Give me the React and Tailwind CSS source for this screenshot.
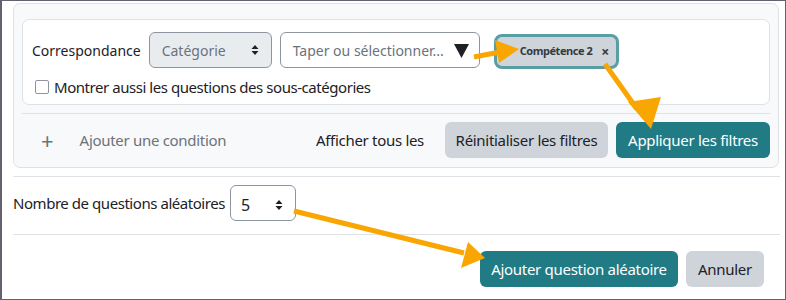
import React from 'react';

const FONT = { fontFamily: '"Noto Sans", "Open Sans", sans-serif' };

function UpDown({ className = '' }) {
    return (
        <svg width="8" height="12" viewBox="0 0 8 12" className={className}>
            <polygon points="4,1 7.5,5 0.5,5" fill="#1d2125" />
            <polygon points="4,11 7.5,7 0.5,7" fill="#1d2125" />
        </svg>
    );
}

function Arrows() {
    // orange callout arrows drawn over the form
    const c = '#f9a602';
    return (
        <svg className="absolute inset-0 pointer-events-none" width="786" height="300" viewBox="0 0 786 300">
            <line x1="472" y1="56" x2="498" y2="51" stroke={c} strokeWidth="5" />
            <polygon points="517,48 493,39 497,62" fill={c} />

            <line x1="603" y1="63" x2="635" y2="108" stroke={c} strokeWidth="5" />
            <polygon points="649,128 626,101 659,96" fill={c} />

            <line x1="292" y1="210" x2="462" y2="252" stroke={c} strokeWidth="5" />
            <polygon points="483,257 459,267 466,241" fill={c} />
        </svg>
    );
}

export default function App() {
    return (
        <div className="relative w-[786px] h-[300px] bg-white border border-[#62626f] border-l-2 overflow-hidden whitespace-nowrap text-[14px] text-[#1d2125]" style={FONT}>
            {/* Filter card */}
            <div className="mt-[2px] ml-[11px] w-[766px] h-[165px] rounded-[7px] border border-[#dee2e6] bg-[#f8f9fa] px-2 pt-[15px]">
                <div className="h-[86px] rounded-[7px] border border-[#dee2e6] bg-white px-[9px] pt-[12px]">
                    <div className="flex items-center h-[36px]">
                        <span className="mr-[8px]">Correspondance</span>
                        <div className="flex items-center justify-between w-[123px] h-[36px] rounded-[6px] border border-[#8f959e] bg-[#e9ecef] pl-[12px] pr-[12px] text-[#6a737b]">
                            <span>Catégorie</span>
                            <UpDown />
                        </div>
                        <div className="flex items-center justify-between ml-[8px] w-[200px] h-[36px] rounded-[6px] border border-[#8f959e] bg-white pl-[12px] pr-[10px] text-[#6a737b]">
                            <span>Taper ou sélectionner...</span>
                            <svg width="15" height="15" viewBox="0 0 15 15"><polygon points="0,1 15,1 7.5,15" fill="#1d2125" /></svg>
                        </div>
                        <div className="flex items-center ml-[14px] mt-[2px] h-[35px] w-[125px] rounded-[8px] border-[3px] border-[#5a9ea5] bg-[#ced4da] pl-[23px] text-[11px] font-bold text-[#343a40]">
                            <span className="tracking-[-0.45px]">Compétence 2</span>
                            <span className="ml-[9px] text-[14px]">×</span>
                        </div>
                    </div>
                    <label className="flex items-center mt-[8px] ml-[3px]">
                        <span className="w-[14px] h-[14px] rounded-[2px] border border-[#8f959e] bg-white mr-[5px]"></span>
                        <span className="text-[15px] tracking-[-0.45px]">Montrer aussi les questions des sous-catégories</span>
                    </label>
                </div>
                <div className="mt-[8px] border-t border-[#dee2e6]"></div>
                <div className="flex items-center justify-between mt-[8px]">
                    <div className="flex items-center text-[#6a737b]">
                        <span className="ml-[19px] text-[22px] leading-none">+</span>
                        <span className="ml-[26px] text-[15px] tracking-[-0.3px]">Ajouter une condition</span>
                    </div>
                    <div className="flex items-center">
                        <span className="mr-[21px] text-[15px] tracking-[-0.3px]">Afficher tous les</span>
                        <button className="h-[36px] w-[163px] rounded-[6px] bg-[#ced4da] text-[#1d2125] text-[15px] tracking-[-0.3px]">Réinitialiser les filtres</button>
                        <button className="ml-[8px] h-[36px] w-[154px] rounded-[6px] bg-[#217b85] text-white text-[15px] tracking-[-0.3px]">Appliquer les filtres</button>
                    </div>
                </div>
            </div>

            <div className="mt-[8px] ml-[11px] w-[767px] border-t border-[#dee2e6]"></div>
            <div className="flex items-center ml-[11px] mt-[8px] h-[36px]">
                <span className="text-[15px] tracking-[-0.45px]">Nombre de questions aléatoires</span>
                <div className="flex items-center justify-between ml-[5px] w-[66px] h-[36px] rounded-[6px] border border-[#8f959e] bg-white pl-[10px] pr-[12px] pt-[3px]">
                    <span className="text-[16px]">5</span>
                    <UpDown />
                </div>
            </div>
            <div className="mt-[13px] ml-[11px] w-[767px] border-t border-[#dee2e6]"></div>
            <div className="flex justify-end mt-[16px] mr-[21px]">
                <button className="h-[36px] w-[198px] rounded-[6px] bg-[#217b85] text-white text-[15px] tracking-[-0.3px]">Ajouter question aléatoire</button>
                <button className="ml-[8px] h-[36px] w-[78px] rounded-[6px] bg-[#ced4da] text-[15px] tracking-[-0.3px]">Annuler</button>
            </div>

            <Arrows />
        </div>
    );
}
